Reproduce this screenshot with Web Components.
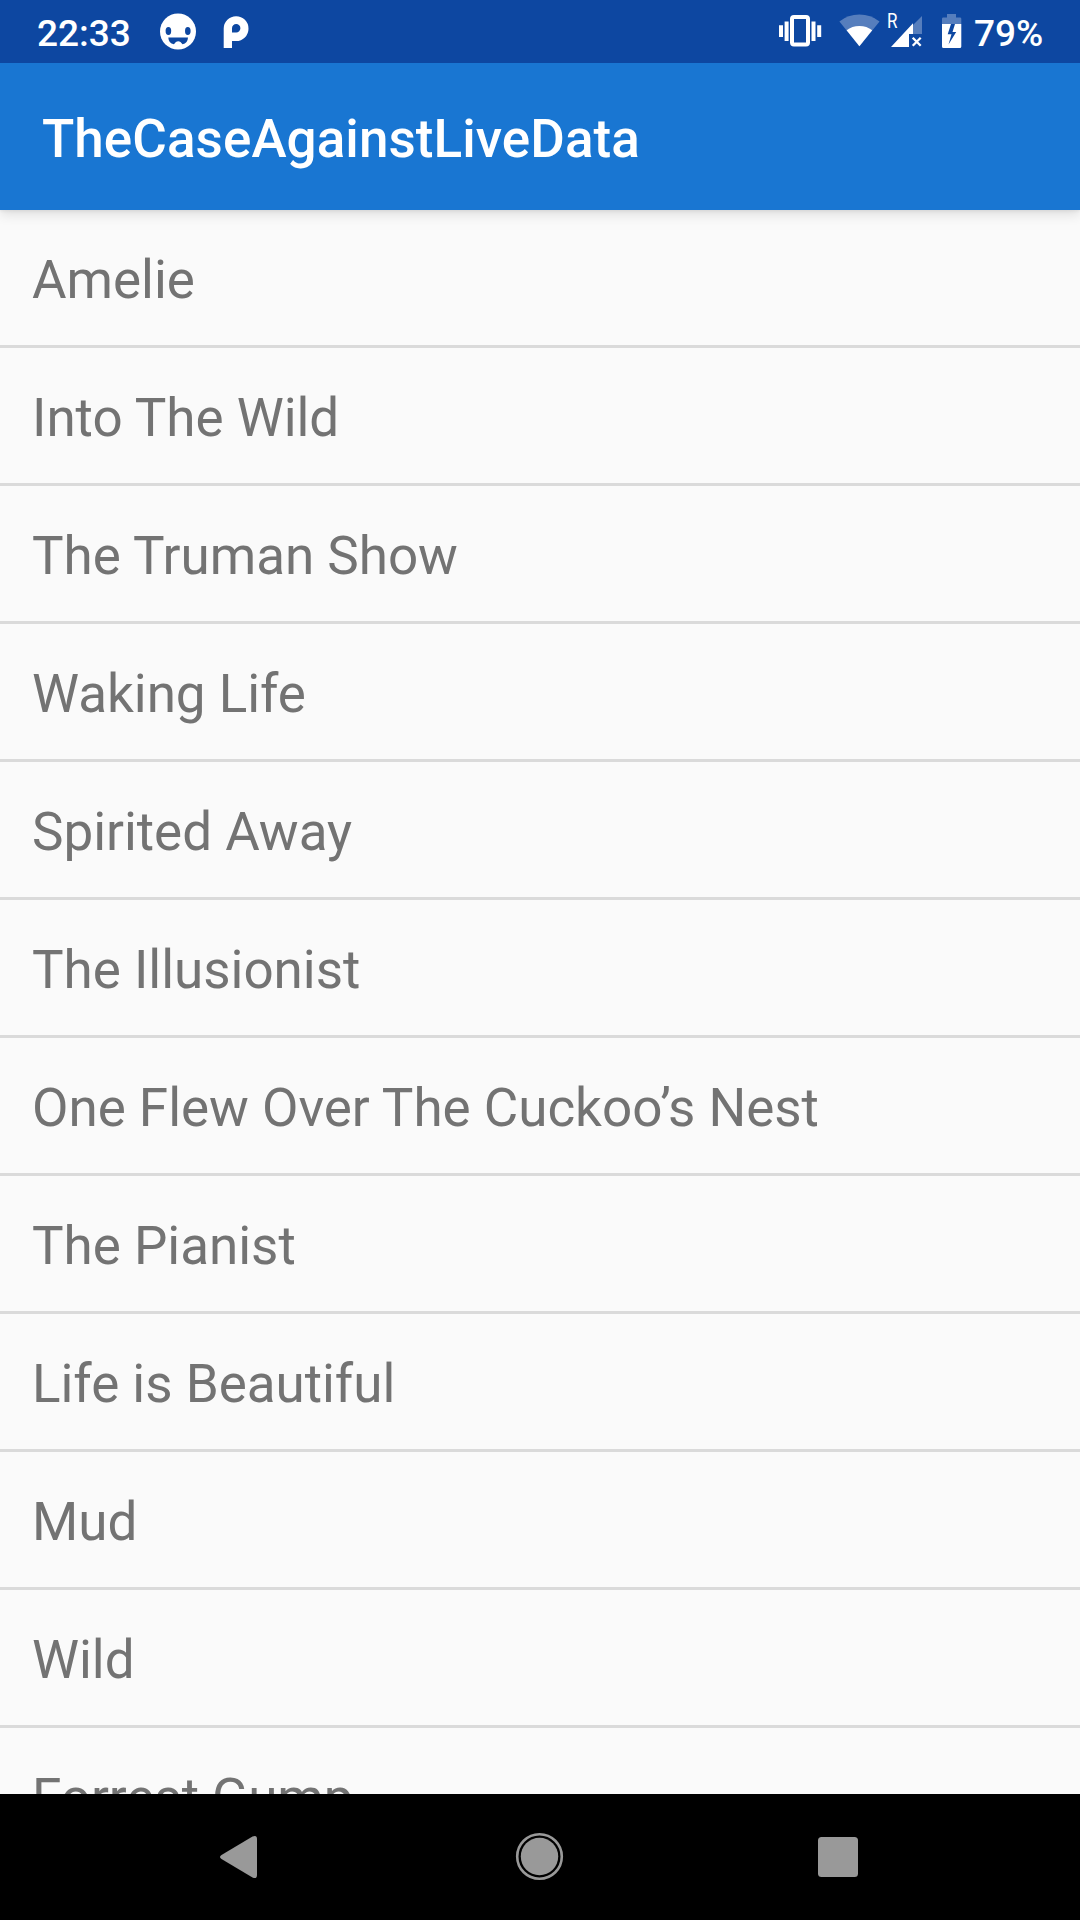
<!DOCTYPE html>
<html lang="en">
<head>
<meta charset="utf-8">
<title>TheCaseAgainstLiveData</title>
<style>
html,body{margin:0;padding:0;height:100%;background:#fafafa}
body{font-family:Roboto,"Noto Sans",sans-serif;overflow:hidden}
</style>
</head>
<body>
<phone-screen>
  <status-bar slot="status" time="22:33" battery="79%"></status-bar>
  <app-bar slot="bar">TheCaseAgainstLiveData</app-bar>
  <movie-row>Amelie</movie-row>
  <movie-row>Into The Wild</movie-row>
  <movie-row>The Truman Show</movie-row>
  <movie-row>Waking Life</movie-row>
  <movie-row>Spirited Away</movie-row>
  <movie-row>The Illusionist</movie-row>
  <movie-row>One Flew Over The Cuckoo’s Nest</movie-row>
  <movie-row>The Pianist</movie-row>
  <movie-row>Life is Beautiful</movie-row>
  <movie-row>Mud</movie-row>
  <movie-row>Wild</movie-row>
  <movie-row>Forrest Gump</movie-row>
  <nav-bar slot="nav"></nav-bar>
</phone-screen>
<script>
const define = (name, html, init) => customElements.define(name, class extends HTMLElement {
  constructor() {
    super();
    this.attachShadow({ mode: "open" }).innerHTML = html;
  }
  connectedCallback() { if (init) init(this, this.shadowRoot); }
});

define("phone-screen", `
<style>
:host{display:flex;flex-direction:column;width:1080px;height:1920px;overflow:hidden;background:#fafafa}
main{flex:1;min-height:0;overflow:hidden}
</style>
<slot name="status"></slot><slot name="bar"></slot>
<main><slot></slot></main>
<slot name="nav"></slot>`);

define("status-bar", `
<style>
:host{display:flex;flex:none;justify-content:space-between;height:63px;background:#0d47a1;color:#fff;padding:0 37px 0 37px;font-size:37px;font-weight:500;line-height:67px;position:relative;z-index:2}
div{display:flex}
svg{display:block;height:63px;flex:none}
.time{width:123px}
.battery{width:69px;margin-left:12px}
</style>
<div>
  <span class="time"></span>
  <svg width="36" viewBox="160 0 36 63"><circle cx="178" cy="31.5" r="18" fill="#fff"/><g fill="#0d47a1"><ellipse cx="168.4" cy="31" rx="2.8" ry="4"/><ellipse cx="187.8" cy="31" rx="2.8" ry="4"/><path d="M168.300 37.500h19.700q-.3 6-5.500 6.700l-2-2.200q-2.300-1.300-4.600 0l-2 2.200q-5.300-.7-5.600-6.700z"/></g></svg>
  <svg width="26" viewBox="223 0 26 63" style="margin-left:27px"><path fill="#fff" fill-rule="evenodd" d="M223.700 48V28.500A12.400 12.400 0 1 1 236.100 41H232v7zM232 32.500h4.200a4.200 4.200 0 1 0-4.200-4.200z"/></svg>
</div>
<div>
  <svg width="43" viewBox="779 0 43 63"><path fill="#fff" fill-rule="evenodd" d="M794 15h12a4 4 0 0 1 4 4v23.500a4 4 0 0 1-4 4h-12a4 4 0 0 1-4-4V19a4 4 0 0 1 4-4zM794 19v23.500h12V19zM784.600 21.500h4V41h-4zM811.500 21.500h4V41h-4zM779 25.300h4V37h-4zM817.200 25.300h4V37h-4z"/></svg>
  <svg width="41" viewBox="839 0 41 63" style="margin-left:17px"><path fill="#fff" fill-opacity=".3" d="M859.400 46.200L839.400 21.500Q848 14.600 859.400 14.600T879.500 21.500z"/><path fill="#fff" d="M859.400 46.200L846.600 30.300Q852 26 859.400 26T872.200 30.300z"/></svg>
  <svg width="36" viewBox="887 0 36 63" style="margin-left:7px"><text transform="translate(886.900 28) scale(.83 1)" font-family="Roboto,sans-serif" font-size="20.500" font-weight="400" fill="#fff">R</text><path fill="#fff" fill-opacity=".3" d="M913 25l9-9v18h-9z"/><path fill="#fff" d="M891 47L913 23.300V34h-4v13z"/><path d="M912.700 37.700l8 8M920.700 37.700l-8 8" stroke="#fff" stroke-width="2.300"/></svg>
  <svg width="20" viewBox="942 0 20 63" style="margin-left:19px"><path fill="#fff" fill-opacity=".3" d="M947 14h9v3.500h4q1.300 0 1.300 1.300V24H942v-5.200q0-1.300 1.300-1.300H947z"/><path fill="#fff" fill-rule="evenodd" d="M942 24h19.300v22.500q0 1.500-1.500 1.500h-16.300q-1.500 0-1.500-1.500zM951 24l-3.300 10.300h3.800l-3 10.200 7.700-12.500h-3.700L955 24z"/></svg>
  <span class="battery"></span>
</div>`, (el, root) => {
  root.querySelector(".time").textContent = el.getAttribute("time");
  root.querySelector(".battery").textContent = el.getAttribute("battery");
});

define("app-bar", `
<style>
:host{display:flex;flex:none;box-sizing:border-box;align-items:center;height:147px;padding:5px 42px 0;background:#1976d2;color:#fff;font-size:53px;letter-spacing:.06px;font-weight:500;line-height:62px;position:relative;z-index:1;box-shadow:0 4px 12px rgba(0,0,0,.12),0 0 4px rgba(0,0,0,.1)}
</style><slot></slot>`);

define("movie-row", `
<style>
:host{display:flex;box-sizing:border-box;align-items:center;height:138px;padding:4px 32px 0;border-bottom:3px solid #dadada;color:#737373;font-size:53px;letter-spacing:-.03px;line-height:62px;white-space:nowrap}
</style><slot></slot>`);

define("nav-bar", `
<style>
:host{display:flex;flex:none;box-sizing:border-box;height:126px;background:#000;padding:0 174px}
svg{display:block;flex:1;height:126px}
</style>
<svg viewBox="174 1794 244 126"><path d="M221.500 1855L252.500 1836.500Q257 1834.500 257 1839V1875Q257 1879.500 252.500 1877.500L221.500 1859Q218.500 1857 221.500 1855z" fill="#999"/></svg>
<svg viewBox="418 1794 244 126"><circle cx="539.500" cy="1856.500" r="22.300" fill="none" stroke="#999" stroke-width="2.600"/><circle cx="539.500" cy="1856.500" r="18.700" fill="#999"/></svg>
<svg viewBox="662 1794 244 126"><rect x="818" y="1837" width="40" height="40" rx="3.500" fill="#999"/></svg>`);
</script>
</body>
</html>
